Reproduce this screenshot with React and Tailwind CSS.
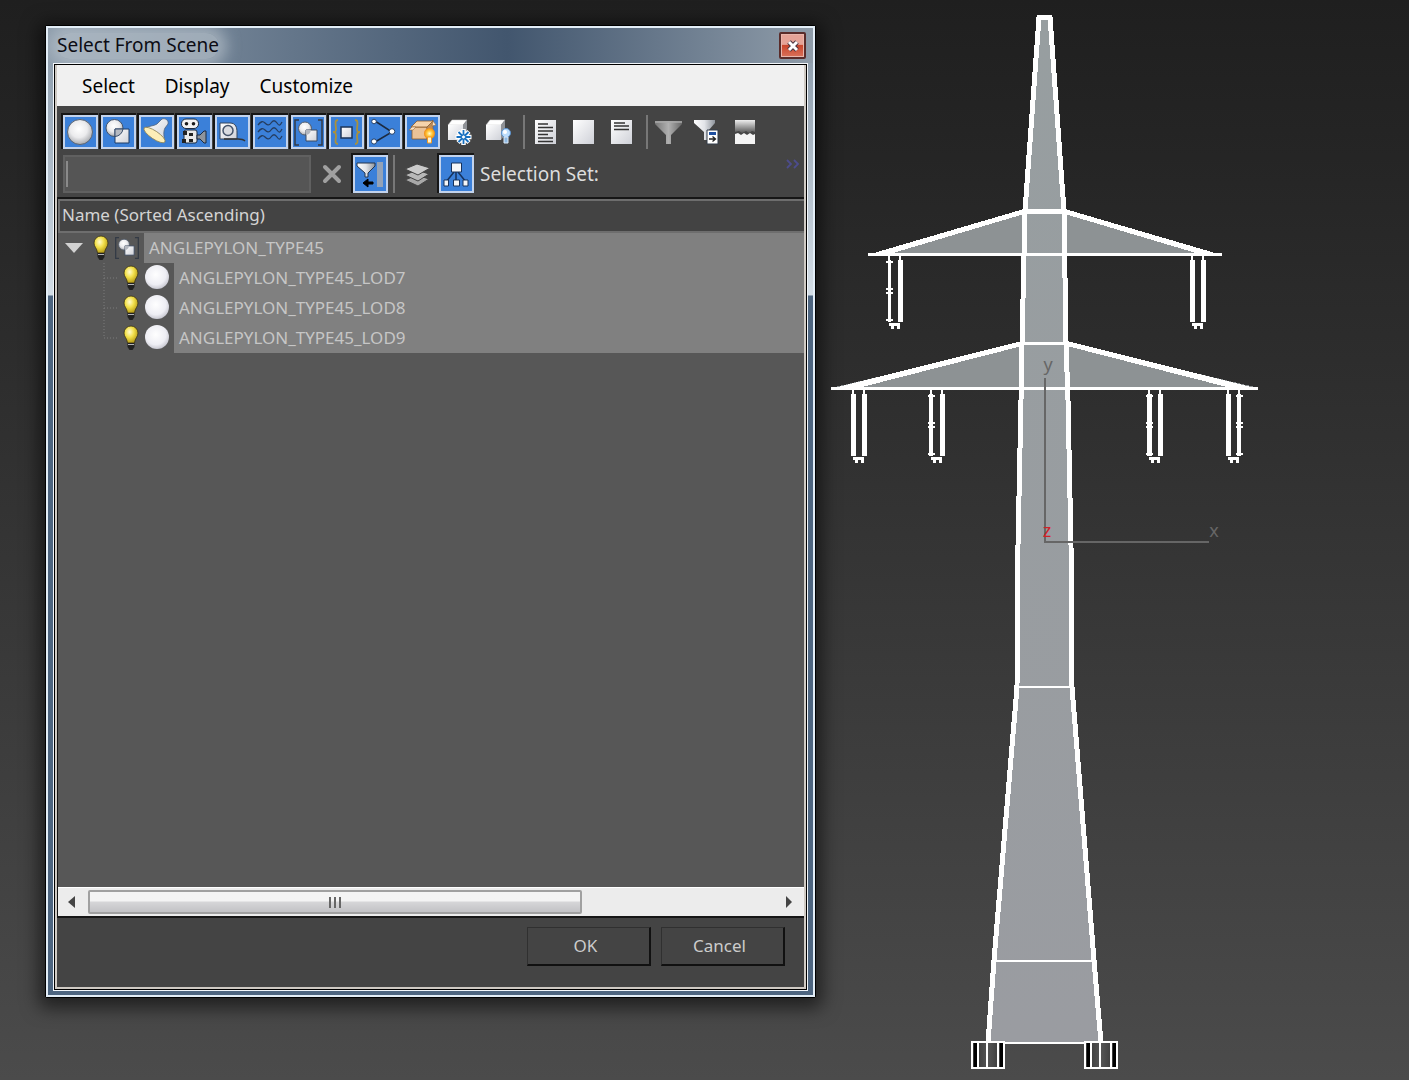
import clsx from "clsx";

/* ---------- Icons ---------- */

function Icon({ children, className = "size-[31px]" }) {
  return (
    <svg viewBox="0 0 31 31" className={className} aria-hidden="true">
      {children}
    </svg>
  );
}

function Gradients() {
  return (
    <svg className="absolute size-0" aria-hidden="true">
      <defs>
        <radialGradient id="ball" cx="0.45" cy="0.38" r="0.62">
          <stop offset="0" stopColor="#ffffff" />
          <stop offset="0.55" stopColor="#ebebed" />
          <stop offset="1" stopColor="#a9abb0" />
        </radialGradient>
        <radialGradient id="whiteBall" cx="0.45" cy="0.4" r="0.6">
          <stop offset="0" stopColor="#ffffff" />
          <stop offset="0.7" stopColor="#eeeef4" />
          <stop offset="1" stopColor="#c9c9d2" />
        </radialGradient>
        <linearGradient id="paper" x1="0" y1="0" x2="1" y2="1">
          <stop offset="0" stopColor="#ffffff" />
          <stop offset="1" stopColor="#cfd1d8" />
        </linearGradient>
        <linearGradient id="metal" x1="0" y1="0" x2="1" y2="0">
          <stop offset="0" stopColor="#777777" />
          <stop offset="0.5" stopColor="#b0b0b0" />
          <stop offset="1" stopColor="#666666" />
        </linearGradient>
        <linearGradient id="silver" x1="0" y1="0" x2="1" y2="0">
          <stop offset="0" stopColor="#ffffff" />
          <stop offset="0.5" stopColor="#e2e4e8" />
          <stop offset="1" stopColor="#8d939b" />
        </linearGradient>
        <linearGradient id="fade" x1="0" y1="0" x2="0" y2="1">
          <stop offset="0" stopColor="#eeeeee" />
          <stop offset="1" stopColor="#555555" />
        </linearGradient>
        <radialGradient id="bulb" cx="0.4" cy="0.35" r="0.7">
          <stop offset="0" stopColor="#fffbd0" />
          <stop offset="0.45" stopColor="#f2e04a" />
          <stop offset="1" stopColor="#b09410" />
        </radialGradient>
        <radialGradient id="glow" cx="0.5" cy="0.5" r="0.5">
          <stop offset="0" stopColor="#fffbd5" />
          <stop offset="0.5" stopColor="#ffc83d" />
          <stop offset="1" stopColor="#f28a10" />
        </radialGradient>
      </defs>
    </svg>
  );
}

const GeometryIcon = () => (
  <Icon>
    <circle cx="15" cy="15" r="12.500" fill="url(#ball)" stroke="#5c6572" strokeWidth="1" />
  </Icon>
);

const ShapesIcon = () => (
  <Icon>
    <circle cx="11.500" cy="11" r="8.500" fill="url(#ball)" stroke="#44566e" />
    <path d="M12 12h14v14H12z" fill="url(#paper)" stroke="#1f3d66" />
    <path d="M12 12h8a8.500 8.500 0 0 1-8 7.500z" fill="#b6bac2" stroke="#3a4f6d" />
  </Icon>
);

const LightIcon = () => (
  <Icon>
    <path d="M3 11c5-2 10-2 13-4l5-5c3-1 7 1 6 5l-3 4c-2 4-1 9 0 14z" fill="url(#paper)" stroke="#51627a" strokeWidth="0.800" />
    <ellipse cx="13.500" cy="18" rx="12.500" ry="4" transform="rotate(34 13.500 18)" fill="#fdeeb8" stroke="#8f8558" strokeWidth="0.800" />
  </Icon>
);

const CameraIcon = () => (
  <Icon>
    <rect x="2.500" y="2" width="17" height="9.500" rx="4.500" fill="#f3f3f3" stroke="#1b2a40" />
    <circle cx="7.500" cy="6.800" r="1.800" fill="#1b1b1b" />
    <circle cx="14.500" cy="6.800" r="1.800" fill="#1b1b1b" />
    <rect x="5" y="13" width="13" height="13" rx="2" fill="#e9e9e9" stroke="#1b2a40" />
    <path d="M4 14h4v4H4zM3 22h4v4H3zM10 16h4v3h-4zM10 22h4v3h-4z" fill="#222" />
    <path d="M18 18h3l4-4h2v12h-2l-4-4h-3z" fill="#8e949c" stroke="#1b2a40" />
  </Icon>
);

const HelperIcon = () => (
  <Icon>
    <path d="M3 6h10c6 0 7 5 7 9v7H3z" fill="url(#paper)" stroke="#33445c" />
    <circle cx="11" cy="13.500" r="5" fill="#d9dbe0" stroke="#44536a" strokeWidth="1.500" />
    <path d="M7 22h14c3 0 6 1 7 2" fill="none" stroke="#333" strokeWidth="1.500" />
  </Icon>
);

const WarpIcon = () => (
  <Icon>
    <path
      d="M3 8c3-4 5-4 7-2s4 3 6 0 4-3 6 0 3 3 5-1M3 15c3-4 5-4 7-2s4 3 6 0 4-3 6 0 3 3 5-1M3 22c3-4 5-4 7-2s4 3 6 0 4-3 6 0 3 3 5-1"
      fill="none"
      stroke="#253d60"
      strokeWidth="1.300"
    />
  </Icon>
);

const GroupIcon = ({ className }) => (
  <Icon className={className}>
    <path d="M6 3H2v25h4M25 3h4v25h-4" fill="none" stroke="#333a45" strokeWidth="1.500" />
    <circle cx="12" cy="11.500" r="6.500" fill="url(#ball)" stroke="#555f6d" />
    <path d="M13 13h11v11H13z" fill="url(#paper)" stroke="#3c4a60" />
    <path d="M13 13h5a6 6 0 0 1-5 5z" fill="#b3b7bf" />
  </Icon>
);

const XrefIcon = () => (
  <Icon>
    <path d="M7 3C3 3 5 9 5 12s-1 3-3 3c2 0 3 1 3 4s-2 8 2 8M24 3c4 0 2 6 2 9s1 3 3 3c-2 0-3 1-3 4s2 8-2 8" fill="none" stroke="#ab913a" strokeWidth="1.800" />
    <path d="M10 10h11v11H10z" fill="url(#paper)" stroke="#1e3557" strokeWidth="1.500" />
  </Icon>
);

const BoneIcon = () => (
  <Icon>
    <path d="M6 4l17 11L6 25" fill="none" stroke="#1c2a40" strokeWidth="1.500" />
    <circle cx="5" cy="4.500" r="2.300" fill="#fff" stroke="#28436a" />
    <circle cx="23" cy="14.500" r="2.800" fill="#fff" stroke="#28436a" />
    <circle cx="5" cy="24.500" r="2.600" fill="#fff" stroke="#28436a" />
  </Icon>
);

const ContainerIcon = () => (
  <Icon>
    <path d="M5 10h15v12H5z" fill="#eac297" stroke="#8a5a2c" strokeWidth="0.800" />
    <path d="M20 10l6-7v12l-6 7z" fill="#c08c55" stroke="#8a5a2c" strokeWidth="0.500" />
    <path d="M4 10l6-6h16l-6 6z" fill="#f5d3ab" stroke="#8a5a2c" strokeWidth="0.800" />
    <path d="M5 10l-3 3h4l3-3zM26 4l3 4-4 1z" fill="#fbe3c6" stroke="#9a6c3b" strokeWidth="0.600" />
    <circle cx="22.500" cy="16.500" r="5.500" fill="url(#glow)" />
    <path d="M20.500 20h4v6h-4z" fill="#fff2d0" stroke="#f09a22" />
  </Icon>
);

const Cube = () => (
  <>
    <path d="M3 8l4-5h15l-4 5z" fill="#ffffff" stroke="#c9c9c9" strokeWidth="0.500" />
    <path d="M3 8h15v15H3z" fill="url(#paper)" />
    <path d="M18 8l4-5v15l-4 5z" fill="#8f9297" />
  </>
);

const FrozenIcon = () => (
  <Icon>
    <Cube />
    <path d="M18.500 12v16M10.500 20h16M13 14.500l11 11M24 14.500l-11 11" stroke="#ffffff" strokeWidth="4.500" />
    <path d="M18.500 13v14M11.500 20h14M13.500 15l10 10M23.500 15l-10 10" stroke="#1770c0" strokeWidth="1.800" />
    <circle cx="18.500" cy="20" r="2" fill="#fff" stroke="#1770c0" />
  </Icon>
);

const HiddenIcon = () => (
  <Icon>
    <Cube />
    <circle cx="23" cy="16" r="4.500" fill="#bcdcfa" stroke="#5b92cf" />
    <circle cx="22" cy="15" r="2" fill="#ffffff" />
    <path d="M21 20h4v6h-4z" fill="#8eb8e2" stroke="#dcebfa" />
  </Icon>
);

const SelectAllIcon = () => (
  <Icon>
    <path d="M5 3h21v24H5z" fill="url(#paper)" />
    <path d="M8 7h10M8 10.500h15M8 14h15M8 17.500h10M8 21h15M8 24.500h15" stroke="#333" strokeWidth="1.400" />
  </Icon>
);

const SelectNoneIcon = () => (
  <Icon>
    <path d="M5 3h21v24H5z" fill="url(#paper)" />
  </Icon>
);

const SelectInvertIcon = () => (
  <Icon>
    <path d="M5 3h21v24H5z" fill="url(#paper)" />
    <path d="M8 6h11M8 9h15M8 12.500h15" stroke="#333" strokeWidth="1.500" />
  </Icon>
);

const FunnelIcon = () => (
  <Icon>
    <path d="M2 4h27v3L18 18v9h-5v-9L2 7z" fill="url(#metal)" />
    <path d="M2 5h27" stroke="#aaaaaa" strokeWidth="1.500" />
  </Icon>
);

const FilterSetIcon = () => (
  <Icon>
    <path d="M3 3h21v3l-7 8v9h-4v-8L3 6z" fill="url(#silver)" />
    <path d="M16 13h11v14H16z" fill="#ffffff" stroke="#333d4a" />
    <path d="M18 15h7v3h-7z" fill="#1e4fa0" />
    <path d="M18 22h6M21.500 19.500l3 2.500-3 2.500" fill="none" stroke="#222" strokeWidth="1.300" />
  </Icon>
);

const SplitIcon = () => (
  <Icon>
    <path d="M6 3h20v12l-3-1-3 2-3-2-4 2-3-2-4 1z" fill="url(#fade)" />
    <path d="M6 17l3-1 3 2 3-2 3 2 3-2 3 2 2-1v10H6z" fill="#f4f4f4" />
  </Icon>
);

const FilterSideIcon = () => (
  <Icon>
    <path d="M22 3h6v25h-6z" fill="#94a3b8" />
    <path d="M2 4h18v3l-7 7v4h-3v-4L2 7z" fill="url(#silver)" stroke="#24344c" />
    <path d="M8 24l5-4v3h5v2h-5v3z" fill="#000" stroke="#000" />
  </Icon>
);

const LayersIcon = () => (
  <Icon>
    <path d="M3 21l12-5 12 4-11 7z" fill="#a8a8a8" stroke="#444" />
    <path d="M3 16l12-5 12 4-11 7z" fill="#b8b8b8" stroke="#444" />
    <path d="M3 10l12-5 13 4-12 7z" fill="#cbcbcb" stroke="#444" />
  </Icon>
);

const HierarchyIcon = () => (
  <Icon>
    <path d="M15 13v10M13 13l-8 10M17 13l8 10" stroke="#17325c" strokeWidth="1.500" fill="none" />
    <path d="M10.500 4h10v9h-10zM3 21h4.500v6H3zM12.500 21h6v6h-6zM22 21h5v6h-5z" fill="#f5f6f8" stroke="#17325c" />
  </Icon>
);

const BulbIcon = () => (
  <svg viewBox="0 0 18 26" className="h-[26px] w-[18px] shrink-0" aria-hidden="true">
    <path d="M9 1a7 7 0 0 1 7 7c0 4-3 5-3.500 10h-7C5 13 2 12 2 8a7 7 0 0 1 7-7z" fill="url(#bulb)" stroke="#3a3415" strokeWidth="0.800" />
    <path d="M5.500 18h7v4l-2 3h-3l-2-3z" fill="#222" />
    <path d="M6 19.500h6" stroke="#b5b5b5" />
  </svg>
);

/* ---------- Toolbar ---------- */

const categoryFilters = [
  { label: "Display Geometry", icon: GeometryIcon, active: true },
  { label: "Display Shapes", icon: ShapesIcon, active: true },
  { label: "Display Lights", icon: LightIcon, active: true },
  { label: "Display Cameras", icon: CameraIcon, active: true },
  { label: "Display Helpers", icon: HelperIcon, active: true },
  { label: "Display Space Warps", icon: WarpIcon, active: true },
  { label: "Display Groups", icon: GroupIcon, active: true },
  { label: "Display XRefs", icon: XrefIcon, active: true },
  { label: "Display Bones", icon: BoneIcon, active: true },
  { label: "Display Containers", icon: ContainerIcon, active: true },
  { label: "Display Frozen", icon: FrozenIcon },
  { label: "Display Hidden", icon: HiddenIcon },
];

const selectionTools = [
  { label: "Select All", icon: SelectAllIcon },
  { label: "Select None", icon: SelectNoneIcon },
  { label: "Select Invert", icon: SelectInvertIcon },
];

const filterTools = [
  { label: "Filter", icon: FunnelIcon },
  { label: "Advanced Filter", icon: FilterSetIcon },
  { label: "Split View", icon: SplitIcon },
];

function ToolButton({ label, icon: Glyph, active, tall }) {
  return (
    <button
      type="button"
      aria-label={label}
      aria-pressed={!!active}
      className={clsx(
        "flex w-[35px] shrink-0 items-center justify-center border-2",
        tall ? "h-[38px]" : "h-[34px]",
        active
          ? "border-[#c3d3ec] bg-[#3b80d9] shadow-[-1px_-1px_0_1px_#161616]"
          : "border-transparent"
      )}
    >
      <Glyph />
    </button>
  );
}

function Toolbar() {
  return (
    <div className="bg-[#444444] pt-[9px] pl-[6px]">
      <div className="flex items-center gap-[3px]">
        {categoryFilters.map((tool) => (
          <ToolButton key={tool.label} {...tool} />
        ))}
        <span className="ml-[4px] h-[34px] w-[2px] bg-[#777777]" />
        {selectionTools.map((tool) => (
          <ToolButton key={tool.label} {...tool} />
        ))}
        <span className="ml-[4px] h-[34px] w-[2px] bg-[#777777]" />
        {filterTools.map((tool) => (
          <ToolButton key={tool.label} {...tool} />
        ))}
      </div>

      {/* Find box + display modes */}
      <div className="flex items-center pt-[6px] pb-[4px]">
        <div className="flex h-[38px] w-[248px] items-center border-2 border-[#606060] bg-[#555555] pl-[1px]">
          <span className="h-[26px] w-[2px] bg-[#8a8a8a]" />
          <input
            type="text"
            aria-label="Find"
            className="min-w-0 flex-1 px-1 text-[17px] leading-6 text-gray-200 outline-none"
          />
        </div>
        <button type="button" aria-label="Clear" className="mx-[10px] flex w-[22px] justify-center">
          <svg viewBox="0 0 20 20" className="size-[20px]" aria-hidden="true">
            <path d="M3 3l14 14M17 3L3 17" stroke="#a0a0a0" strokeWidth="4" strokeLinecap="round" />
          </svg>
        </button>
        <ToolButton label="Display Filter" icon={FilterSideIcon} active tall />
        <span className="mx-[5px] h-[38px] w-[2px] bg-[#777777]" />
        <div className="flex gap-[4px]">
          <ToolButton label="Display Layers" icon={LayersIcon} tall />
          <ToolButton label="Display Children" icon={HierarchyIcon} active tall />
        </div>
        <span className="pl-[6px] text-[19px] leading-6 text-[#dddddd]">Selection Set:</span>
        <button type="button" aria-label="More" className="mr-[4px] mb-[20px] ml-auto">
          <svg viewBox="0 0 14 10" className="h-[10px] w-[14px]" aria-hidden="true">
            <path d="M1 1l4 4-4 4M8 1l4 4-4 4" fill="none" stroke="#4c4c8c" strokeWidth="1.800" />
          </svg>
        </button>
      </div>
    </div>
  );
}

/* ---------- Object list ---------- */

const lods = ["ANGLEPYLON_TYPE45_LOD7", "ANGLEPYLON_TYPE45_LOD8", "ANGLEPYLON_TYPE45_LOD9"];

function ObjectTree() {
  return (
    <ul className="flex-1 bg-[#575757] text-[17px] leading-[30px] text-[#c6c6c6]">
      <li>
        <div className="flex h-[30px] items-center pl-[6px]">
          <svg viewBox="0 0 20 12" className="mr-[8px] h-[12px] w-[20px] shrink-0" aria-hidden="true">
            <path d="M1 1h18L10 11z" fill="#d2d2d2" />
          </svg>
          <BulbIcon />
          <GroupIcon className="mx-[4px] size-[26px] shrink-0" />
          <span className="flex-1 bg-[#808080] pl-[5px]">ANGLEPYLON_TYPE45</span>
        </div>
        <ul>
          {lods.map((name, i) => (
            <li key={name} className="flex h-[30px] items-center pl-[45px]">
              <svg viewBox="0 0 14 30" className="mr-[5px] h-[30px] w-[14px] shrink-0" aria-hidden="true">
                <path
                  d={i === lods.length - 1 ? "M1 0v15h13" : "M1 0v30M1 15h13"}
                  fill="none"
                  stroke="#7d7d7d"
                  strokeDasharray="1 2"
                />
              </svg>
              <BulbIcon />
              <svg viewBox="0 0 28 28" className="mx-[3px] size-[28px] shrink-0" aria-hidden="true">
                <circle cx="14" cy="13" r="12" fill="url(#whiteBall)" />
              </svg>
              <span className="flex-1 bg-[#808080] pl-[5px]">{name}</span>
            </li>
          ))}
        </ul>
      </li>
    </ul>
  );
}

function ScrollBar() {
  return (
    <div className="flex h-[29px] items-center border-t border-white bg-[#ececec]">
      <button type="button" aria-label="Scroll left" className="flex w-[30px] justify-center pr-[3px]">
        <svg viewBox="0 0 8 12" className="h-[12px] w-[8px]" aria-hidden="true">
          <path d="M7 0v12L0 6z" fill="#444" />
        </svg>
      </button>
      <div className="flex-1">
        <div className="flex h-[24px] w-[72%] items-center justify-center gap-[3px] rounded-xs border-2 border-[#a0a0a0] bg-linear-to-b from-[#f4f4f4] from-45% via-[#d6d6d8] via-50% to-[#c2c2c5]">
          <span className="h-[11px] w-[2px] bg-[#666666]" />
          <span className="h-[11px] w-[2px] bg-[#666666]" />
          <span className="h-[11px] w-[2px] bg-[#666666]" />
        </div>
      </div>
      <button type="button" aria-label="Scroll right" className="flex w-[30px] justify-center">
        <svg viewBox="0 0 8 12" className="h-[12px] w-[8px]" aria-hidden="true">
          <path d="M1 0v12l6-6z" fill="#444" />
        </svg>
      </button>
    </div>
  );
}

/* ---------- Dialog ---------- */

function DialogButton({ children }) {
  return (
    <button
      type="button"
      className="h-[39px] w-[124px] border-t border-r-2 border-b-2 border-l border-t-[#303030] border-r-[#111111] border-b-[#111111] border-l-[#303030] pr-[6px] text-[17px] leading-6 text-[#cccccc]"
    >
      {children}
    </button>
  );
}

function SelectDialog() {
  return (
    <section
      aria-label="Select From Scene"
      className="mt-[25px] mb-[82px] ml-[45px] flex flex-col rounded-xs border border-black shadow-[0_4px_18px_6px_rgba(0,0,0,0.55)]"
    >
      <div className="flex flex-1 flex-col border-2 border-[#e3eef7] bg-linear-to-b from-[#8797a7] from-0% via-[#d3dde6] via-[267px] to-[#4d6580] to-[268px] px-[5px] pb-[4px]">
        {/* Title bar */}
        <div className="-mx-[5px] flex h-[35px] items-center justify-between overflow-hidden bg-linear-to-r from-[#8d9cab] via-[#42566e] via-60% to-[#8f9ca9] pr-[7px] pl-[9px]">
          <h1 className="rounded-full bg-[#bcc6cf]/60 pb-[2px] text-[19px] leading-6 text-[#0c0c14] shadow-[0_0_14px_8px_rgba(188,198,207,0.6)]">
            Select From Scene
          </h1>
          <button
            type="button"
            aria-label="Close"
            className="flex h-[27px] w-[27px] items-center justify-center rounded-xs border-2 border-[#5a2c2a] bg-linear-to-b from-[#e5a397] from-45% via-[#c9452b] via-50% to-[#d9715a] shadow-[inset_0_0_0_1px_#e8b5ab]"
          >
            <svg viewBox="0 0 14 14" className="size-[14px]" aria-hidden="true">
              <path d="M3 3l8 8M11 3l-8 8" stroke="#4a3540" strokeWidth="5" />
              <path d="M3 3l8 8M11 3l-8 8" stroke="#ffffff" strokeWidth="3" />
            </svg>
          </button>
        </div>

        <div className="flex flex-1 flex-col border border-[#f2f6fa]">
          <div className="flex flex-1 flex-col border border-black">
            <div className="flex flex-1 flex-col border-r-2 border-b-2 border-l-2 border-[#cfcac4] bg-[#444444]">
              <nav className="flex h-[41px] items-center gap-[30px] bg-[#f0f0f0] pl-[25px] text-[19px] leading-6 text-black">
                <button type="button">Select</button>
                <button type="button">Display</button>
                <button type="button">Customize</button>
              </nav>
              <Toolbar />
              <div className="flex flex-1 flex-col border-t-2 border-b-2 border-l border-[#161616]">
                <div className="flex h-[34px] items-center border-2 border-r-0 border-[#6e6e6e] bg-[#434343] pb-[2px] pl-[2px] text-[17px] leading-6 text-[#d4d4d4]">
                  Name (Sorted Ascending)
                </div>
                <ObjectTree />
                <ScrollBar />
              </div>
              <div className="flex justify-end gap-[10px] pt-[9px] pr-[19px] pb-[21px]">
                <DialogButton>OK</DialogButton>
                <DialogButton>Cancel</DialogButton>
              </div>
            </div>
          </div>
        </div>
      </div>
    </section>
  );
}

/* ---------- Viewport ---------- */

const insulators = [
  { x: 889, y: 254, knobs: true, left: 3, right: 5 },
  { x: 1192, y: 254, left: 5, right: 5 },
  { x: 853, y: 388, left: 5, right: 5 },
  { x: 931, y: 388, knobs: true, left: 4, right: 5 },
  { x: 1149, y: 388, knobs: true, left: 5, right: 5 },
  { x: 1228, y: 388, knobsRight: true, left: 5, right: 4 },
];

function Insulator({ x, y, left, right, knobs, knobsRight }) {
  const knobX = knobsRight ? x + 11 : x;
  return (
    <g stroke="#ffffff">
      <path d={`M${x} ${y}v8M${x + 11} ${y}v8`} strokeWidth="2" />
      <path d={`M${x} ${y + 6}v62`} strokeWidth={left} />
      <path d={`M${x + 11} ${y + 6}v62`} strokeWidth={right} />
      {(knobs || knobsRight) && (
        <path
          d={`M${knobX - 3} ${y + 8}h7M${knobX - 3} ${y + 35}h7M${knobX - 3} ${y + 39}h7M${knobX - 3} ${y + 66}h7`}
          strokeWidth="2"
        />
      )}
      <path d={`M${x} ${y + 70}h11M${x + 3} ${y + 70}v5M${x + 9} ${y + 70}v5`} strokeWidth="3" />
    </g>
  );
}

function Footing({ x }) {
  return (
    <g>
      <rect x={x} y="1042" width="32" height="26" fill="url(#footing)" stroke="#ffffff" strokeWidth="2" />
      <path d={`M${x + 3} 1043v24M${x + 29} 1043v24`} stroke="#000000" strokeWidth="3" />
      <path d={`M${x + 6} 1042v26M${x + 15} 1042v26M${x + 26} 1042v26`} stroke="#ffffff" strokeWidth="2" />
    </g>
  );
}

function Viewport() {
  return (
    <svg
      viewBox="816 0 593 1080"
      preserveAspectRatio="xMidYMin meet"
      className="h-screen w-full"
      role="img"
      aria-label="Pylon, front view"
    >
      <defs>
        <linearGradient id="tower" x1="0" y1="0" x2="0" y2="1">
          <stop offset="0" stopColor="#979ea0" />
          <stop offset="1" stopColor="#9a9ca1" />
        </linearGradient>
        <linearGradient id="footing" x1="0" y1="0" x2="1" y2="0">
          <stop offset="0" stopColor="#333333" />
          <stop offset="0.5" stopColor="#555555" />
          <stop offset="1" stopColor="#333333" />
        </linearGradient>
      </defs>

      <g shapeRendering="crispEdges">
        {/* Cross arms */}
        <path d="M1025 211L872 254h346L1064 211z" fill="#8d9294" />
        <path d="M1022 343L835 387h420L1067 343z" fill="#8d9294" />
        <path
          d="M867 255L1024 209v5L893 253zM1222 255L1065 209v5l131 39zM830 389l192-48v5L862 387zM1259 389l-192-48v5l160 41z"
          fill="#ffffff"
        />

        {/* Tower */}
        <path
          d="M1039 17h11L1064 211 1066 343 1068 400 1072 687 1094 960 1101 1043H988L994 960 1017 687 1021 400 1022 343 1025 211z"
          fill="url(#tower)"
        />
        <path
          d="M988 1043L994 960 1017 687 1018 545 1021 400 1022 343 1025 211 1039 17h11L1064 211 1066 343 1068 400 1071 545 1072 687 1094 960 1101 1043"
          fill="none"
          stroke="#ffffff"
          strokeWidth="5"
        />
        <path d="M1025 211h39" stroke="#ffffff" strokeWidth="5" />
        <path d="M868 254h354M1022 343h45M831 388h427" stroke="#ffffff" strokeWidth="3" />
        <path d="M1017 687h56M994 961h100M988 1043h113" stroke="#ffffff" strokeWidth="2" />

        {insulators.map((item) => (
          <Insulator key={item.x} {...item} />
        ))}
        <Footing x={972} />
        <Footing x={1085} />

        {/* Axis tripod */}
        <path d="M1045 378v164h164" fill="none" stroke="#666666" strokeWidth="2" />
      </g>
      <g fontSize="18" textAnchor="middle" fill="#666666">
        <text x="1048" y="371">y</text>
        <text x="1214" y="537">x</text>
        <text x="1047" y="537" fill="#d02028">z</text>
      </g>
    </svg>
  );
}

export default function App() {
  return (
    <main className="grid min-h-screen grid-cols-[816fr_593fr] bg-linear-to-b from-[#1f1f1f] to-[#4b4b4b] font-['Noto_Sans',sans-serif]">
      <Gradients />
      <SelectDialog />
      <Viewport />
    </main>
  );
}
